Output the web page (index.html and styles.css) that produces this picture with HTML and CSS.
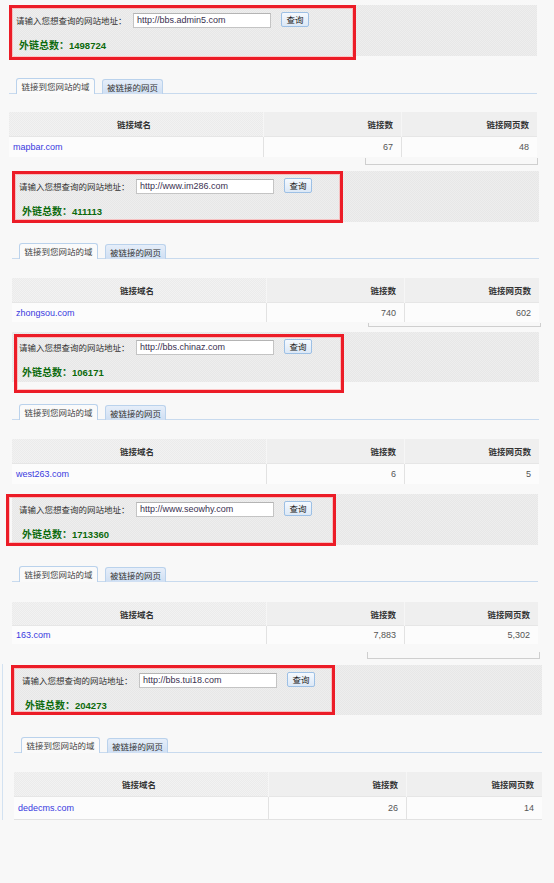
FILE: index.html
```html
<!DOCTYPE html>
<html lang="zh-CN">
<head>
<meta charset="utf-8">
<title>外链查询</title>
<link rel="stylesheet" href="styles.css">
</head>
<body>
<div class="page">

  <div class="shot s1">
    <div class="panel">
      <div class="query">
        <span class="label">请输入您想查询的网站地址：</span>
        <span class="input">http://bbs.admin5.com</span>
        <span class="btn">查询</span>
      </div>
      <div class="total">外链总数：<b>1498724</b></div>
      <div class="mark"></div>
    </div>
    <div class="tabs">
      <span class="tab active">链接到您网站的域</span>
      <span class="tab">被链接的网页</span>
    </div>
    <table class="grid">
      <thead><tr><th class="c1">链接域名</th><th class="c2">链接数</th><th class="c3">链接网页数</th></tr></thead>
      <tbody><tr><td class="c1"><a>mapbar.com</a></td><td class="c2">67</td><td class="c3">48</td></tr></tbody>
    </table>
    <div class="pager"></div>
  </div>

  <div class="shot s2">
    <div class="panel">
      <div class="query">
        <span class="label">请输入您想查询的网站地址：</span>
        <span class="input">http://www.im286.com</span>
        <span class="btn">查询</span>
      </div>
      <div class="total">外链总数：<b>411113</b></div>
      <div class="mark"></div>
    </div>
    <div class="tabs">
      <span class="tab active">链接到您网站的域</span>
      <span class="tab">被链接的网页</span>
    </div>
    <table class="grid">
      <thead><tr><th class="c1">链接域名</th><th class="c2">链接数</th><th class="c3">链接网页数</th></tr></thead>
      <tbody><tr><td class="c1"><a>zhongsou.com</a></td><td class="c2">740</td><td class="c3">602</td></tr></tbody>
    </table>
    <div class="pager"></div>
  </div>

  <div class="shot s3">
    <div class="panel">
      <div class="query">
        <span class="label">请输入您想查询的网站地址：</span>
        <span class="input">http://bbs.chinaz.com</span>
        <span class="btn">查询</span>
      </div>
      <div class="total">外链总数：<b>106171</b></div>
      <div class="mark"></div>
    </div>
    <div class="tabs">
      <span class="tab active">链接到您网站的域</span>
      <span class="tab">被链接的网页</span>
    </div>
    <table class="grid">
      <thead><tr><th class="c1">链接域名</th><th class="c2">链接数</th><th class="c3">链接网页数</th></tr></thead>
      <tbody><tr><td class="c1"><a>west263.com</a></td><td class="c2">6</td><td class="c3">5</td></tr></tbody>
    </table>
  </div>

  <div class="shot s4">
    <div class="panel">
      <div class="query">
        <span class="label">请输入您想查询的网站地址：</span>
        <span class="input">http://www.seowhy.com</span>
        <span class="btn">查询</span>
      </div>
      <div class="total">外链总数：<b>1713360</b></div>
      <div class="mark"></div>
    </div>
    <div class="tabs">
      <span class="tab active">链接到您网站的域</span>
      <span class="tab">被链接的网页</span>
    </div>
    <table class="grid">
      <thead><tr><th class="c1">链接域名</th><th class="c2">链接数</th><th class="c3">链接网页数</th></tr></thead>
      <tbody><tr><td class="c1"><a>163.com</a></td><td class="c2">7,883</td><td class="c3">5,302</td></tr></tbody>
    </table>
    <div class="pager"></div>
  </div>

  <div class="shot s5">
    <div class="panel">
      <div class="query">
        <span class="label">请输入您想查询的网站地址：</span>
        <span class="input">http://bbs.tui18.com</span>
        <span class="btn">查询</span>
      </div>
      <div class="total">外链总数：<b>204273</b></div>
      <div class="mark"></div>
    </div>
    <div class="tabs">
      <span class="tab active">链接到您网站的域</span>
      <span class="tab">被链接的网页</span>
    </div>
    <table class="grid">
      <thead><tr><th class="c1">链接域名</th><th class="c2">链接数</th><th class="c3">链接网页数</th></tr></thead>
      <tbody><tr><td class="c1"><a>dedecms.com</a></td><td class="c2">26</td><td class="c3">14</td></tr></tbody>
    </table>
  </div>

</div>
</body>
</html>
```

FILE: styles.css
```css
html, body {
  margin: 0;
  padding: 0;
  background: #f8f8f8;
}

body {
  font-family: "Liberation Sans", "Noto Sans CJK SC", sans-serif;
  color: #333;
  width: 554px;
  height: 883px;
  overflow: hidden;
}

.page {
  display: flow-root;
}

/* ---------- one captured screenshot ---------- */
.shot {
  position: relative;
}

.s1 { margin: 5px 0 0 9px;  width: 528px; }
.s2 { margin: 6px 0 0 12px; width: 527px; }
.s3 { margin: 5px 0 0 12px; width: 527px; }
.s4 { margin: 10px 0 0 12px; width: 526px; }
.s5 {
  margin: 5px 0 0 2px;
  padding: 1px 0 0 11px;
  width: 528px;
  border-left: 1px solid #d3e2f1;
}

/* ---------- query panel ---------- */
.panel {
  position: relative;
  height: 51px;
  box-sizing: border-box;
  padding: 7px 0 0 7px;
  background: repeating-conic-gradient(#e7e7e7 0 25%, #eeeeee 0 50%) 0 0 / 2px 2px;
}

.s3 .panel { height: 50px; }
.s5 .panel { height: 50px; padding-left: 8px; }

.query {
  display: flex;
  align-items: center;
  height: 16px;
}

.label {
  width: 117px;
  font-family: "Noto Sans CJK SC", sans-serif;
  font-size: 8.5px;
  line-height: 12px;
  color: #333;
  white-space: nowrap;
}

.input {
  display: block;
  box-sizing: border-box;
  width: 138px;
  height: 15px;
  padding-left: 3px;
  border: 1px solid #c4c4c4;
  border-top-color: #b4b4b4;
  background: #fff;
  font-size: 9px;
  line-height: 13px;
  color: #3a3050;
  white-space: nowrap;
}

.btn {
  display: block;
  box-sizing: border-box;
  width: 28px;
  height: 15px;
  margin-left: 10px;
  margin-top: -1px;
  border: 1px solid #9dc0e5;
  border-radius: 2px;
  background: linear-gradient(#f5f9fe, #dce8f6);
  font-family: "Noto Sans CJK SC", sans-serif;
  font-size: 8.5px;
  line-height: 13px;
  text-align: center;
  color: #222;
}

.total {
  margin: 10px 0 0 3px;
  height: 14px;
  line-height: 14px;
  font-family: "Noto Sans CJK SC", sans-serif;
  font-size: 10px;
  font-weight: bold;
  color: #0c6a0c;
  white-space: nowrap;
}

.total b {
  font-family: "Liberation Sans", sans-serif;
  font-size: 9.5px;
}

/* red annotation frame drawn over the panel */
.mark {
  position: absolute;
  left: 0;
  top: 0;
  width: 347px;
  height: 55px;
  box-sizing: border-box;
  border: 3px solid #ec1c27;
  box-shadow: inset 0 0 0 1px rgba(255, 150, 150, 0.5);
  pointer-events: none;
}

.s2 .mark { width: 331px; height: 52px; }
.s3 .mark { left: 2px; top: 2px; width: 330px; height: 59px; }
.s4 .mark { left: -6px; width: 330px; height: 52px; }
.s5 .mark { left: -3px; width: 324px; height: 50px; }

/* ---------- tabs ---------- */
.tabs {
  display: flex;
  align-items: flex-end;
  gap: 7px;
  margin-top: 22px;
  padding-left: 7px;
  height: 15px;
  border-bottom: 1px solid #c8daee;
}

.s2 .tabs,
.s4 .tabs { margin-top: 21px; }

.tab {
  display: block;
  box-sizing: border-box;
  height: 15px;
  margin-bottom: -1px;
  border: 1px solid #bad2ec;
  border-bottom: none;
  border-radius: 3px 3px 0 0;
  background: linear-gradient(#e6eef9, #cfdff3);
  font-family: "Noto Sans CJK SC", sans-serif;
  font-size: 8.5px;
  line-height: 14px;
  text-align: center;
  color: #333;
  white-space: nowrap;
  width: 61px;
}

.tab.active {
  width: 79px;
  height: 16px;
  background: #fafafa;
  color: #444;
}

/* ---------- result table ---------- */
.grid {
  margin-top: 18px;
  width: 100%;
  border-collapse: collapse;
  table-layout: fixed;
}

.s2 .grid,
.s3 .grid,
.s5 .grid { margin-top: 19px; }
.s4 .grid { margin-top: 20px; }

.grid th,
.grid td {
  padding: 0 8px 0 4px;
  border-left: 1px solid #e2e2e2;
  white-space: nowrap;
}

.grid th:first-child,
.grid td:first-child {
  border-left: none;
}

.grid th {
  height: 24px;
  background: repeating-conic-gradient(#ebebeb 0 25%, #f2f2f2 0 50%) 0 0 / 2px 2px;
  border-left-color: #f6f6f6;
  font-family: "Noto Sans CJK SC", sans-serif;
  font-size: 8.5px;
  font-weight: bold;
  color: #333;
}

.s4 .grid th { height: 23px; }

.grid td {
  height: 20px;
  background: #fcfcfc;
  font-size: 9px;
  color: #555;
  border-top: 1px solid #e6e6e6;
}

.s2 .grid td { height: 19px; }
.s4 .grid td { height: 18px; }

.grid .c1 { width: 242px; }
.grid .c2 { width: 125px; text-align: right; }
.grid .c3 { text-align: right; }
.grid th.c1 { text-align: center; }
.grid td.c1 { text-align: left; }

.grid a {
  color: #3a3adf;
  text-decoration: none;
}

.s5 .grid td { height: 22px; border-bottom: 1px solid #e2e2e2; }

/* clipped edge of the paging bar below the table */
.pager {
  margin: 1px 0 0 356px;
  width: 173px;
  height: 7px;
  box-sizing: border-box;
  border: 1px solid #cfcfcf;
  border-top: none;
}

.s2 .pager { height: 4px; }
.s4 .pager { margin-top: 8px; margin-left: 355px; }
```
